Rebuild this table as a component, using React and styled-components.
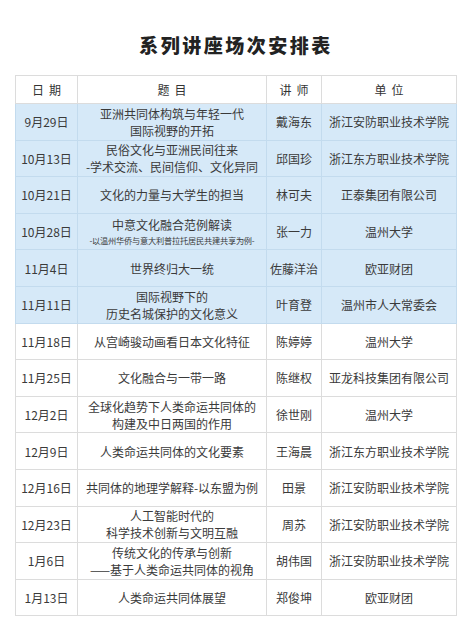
import React from "react";
import styled, { createGlobalStyle } from "styled-components";

const Global = createGlobalStyle`
  body {
    margin: 0;
    background: #fff;
    font-family: "Noto Sans CJK SC", "Noto Sans", sans-serif;
    color: #333;
  }
`;

const Page = styled.div`
  width: 472px;
  height: 638px;
  padding-top: 33px;
  box-sizing: border-box;
`;

const Title = styled.h1`
  margin: 0 0 18px;
  text-align: center;
  font-size: 19px;
  line-height: 24px;
  font-weight: 900;
  letter-spacing: 2.5px;
  color: #222;
`;

const Table = styled.table`
  margin-left: 15px;
  width: 441px;
  border-collapse: collapse;
  table-layout: fixed;
`;

const HeadCell = styled.th`
  height: 27px;
  padding: 0;
  font-size: 12px;
  font-weight: 400;
  letter-spacing: 5px;
  text-indent: 5px;
  border: 1px solid #dcdcdc;
  color: #333;
`;

const Row = styled.tr`
  height: 36.6px;
  background: ${(p) => (p.$blue ? "#d6e9f8" : "#fff")};
`;

const Cell = styled.td`
  padding: 0 2px;
  text-align: center;
  vertical-align: middle;
  font-size: 12px;
  line-height: 17px;
  border: 1px solid ${(p) => (p.$blue ? "#c3dbee" : "#dcdcdc")};
  white-space: nowrap;
  color: #3a3a3a;
`;

const Line = styled.div`
  height: 17px;
`;

const Small = styled.div`
  font-size: 8.2px;
  line-height: 15px;
  letter-spacing: -0.2px;
`;

const rows = [
  ["9月29日", ["亚洲共同体构筑与年轻一代", "国际视野的开拓"], "戴海东", "浙江安防职业技术学院", true],
  ["10月13日", ["民俗文化与亚洲民间往来", "-学术交流、民间信仰、文化异同"], "邱国珍", "浙江东方职业技术学院", true],
  ["10月21日", ["文化的力量与大学生的担当"], "林可夫", "正泰集团有限公司", true],
  ["10月28日", ["中意文化融合范例解读"], "张一力", "温州大学", true, "-以温州华侨与意大利普拉托居民共建共享为例-"],
  ["11月4日", ["世界终归大一统"], "佐藤洋治", "欧亚财团", true],
  ["11月11日", ["国际视野下的", "历史名城保护的文化意义"], "叶育登", "温州市人大常委会", true],
  ["11月18日", ["从宫崎骏动画看日本文化特征"], "陈婷婷", "温州大学"],
  ["11月25日", ["文化融合与一带一路"], "陈继权", "亚龙科技集团有限公司"],
  ["12月2日", ["全球化趋势下人类命运共同体的", "构建及中日两国的作用"], "徐世刚", "温州大学"],
  ["12月9日", ["人类命运共同体的文化要素"], "王海晨", "浙江东方职业技术学院"],
  ["12月16日", ["共同体的地理学解释-以东盟为例"], "田景", "浙江安防职业技术学院"],
  ["12月23日", ["人工智能时代的", "科学技术创新与文明互融"], "周苏", "浙江安防职业技术学院"],
  ["1月6日", ["传统文化的传承与创新", "——基于人类命运共同体的视角"], "胡伟国", "浙江安防职业技术学院"],
  ["1月13日", ["人类命运共同体展望"], "郑俊坤", "欧亚财团"],
];

export default function App() {
  return (
    <Page>
      <Global />
      <Title>系列讲座场次安排表</Title>
      <Table>
        <colgroup>
          <col style={{ width: 62 }} />
          <col style={{ width: 189 }} />
          <col style={{ width: 55 }} />
          <col style={{ width: 135 }} />
        </colgroup>
        <thead>
          <tr>
            <HeadCell>日期</HeadCell>
            <HeadCell>题目</HeadCell>
            <HeadCell>讲师</HeadCell>
            <HeadCell>单位</HeadCell>
          </tr>
        </thead>
        <tbody>
          {rows.map(([date, topic, who, org, blue, small]) => (
            <Row key={date} $blue={blue}>
              <Cell $blue={blue}>{date}</Cell>
              <Cell $blue={blue}>
                {topic.map((t, i) => (
                  <Line key={i}>{t}</Line>
                ))}
                {small && <Small>{small}</Small>}
              </Cell>
              <Cell $blue={blue}>{who}</Cell>
              <Cell $blue={blue}>{org}</Cell>
            </Row>
          ))}
        </tbody>
      </Table>
    </Page>
  );
}
